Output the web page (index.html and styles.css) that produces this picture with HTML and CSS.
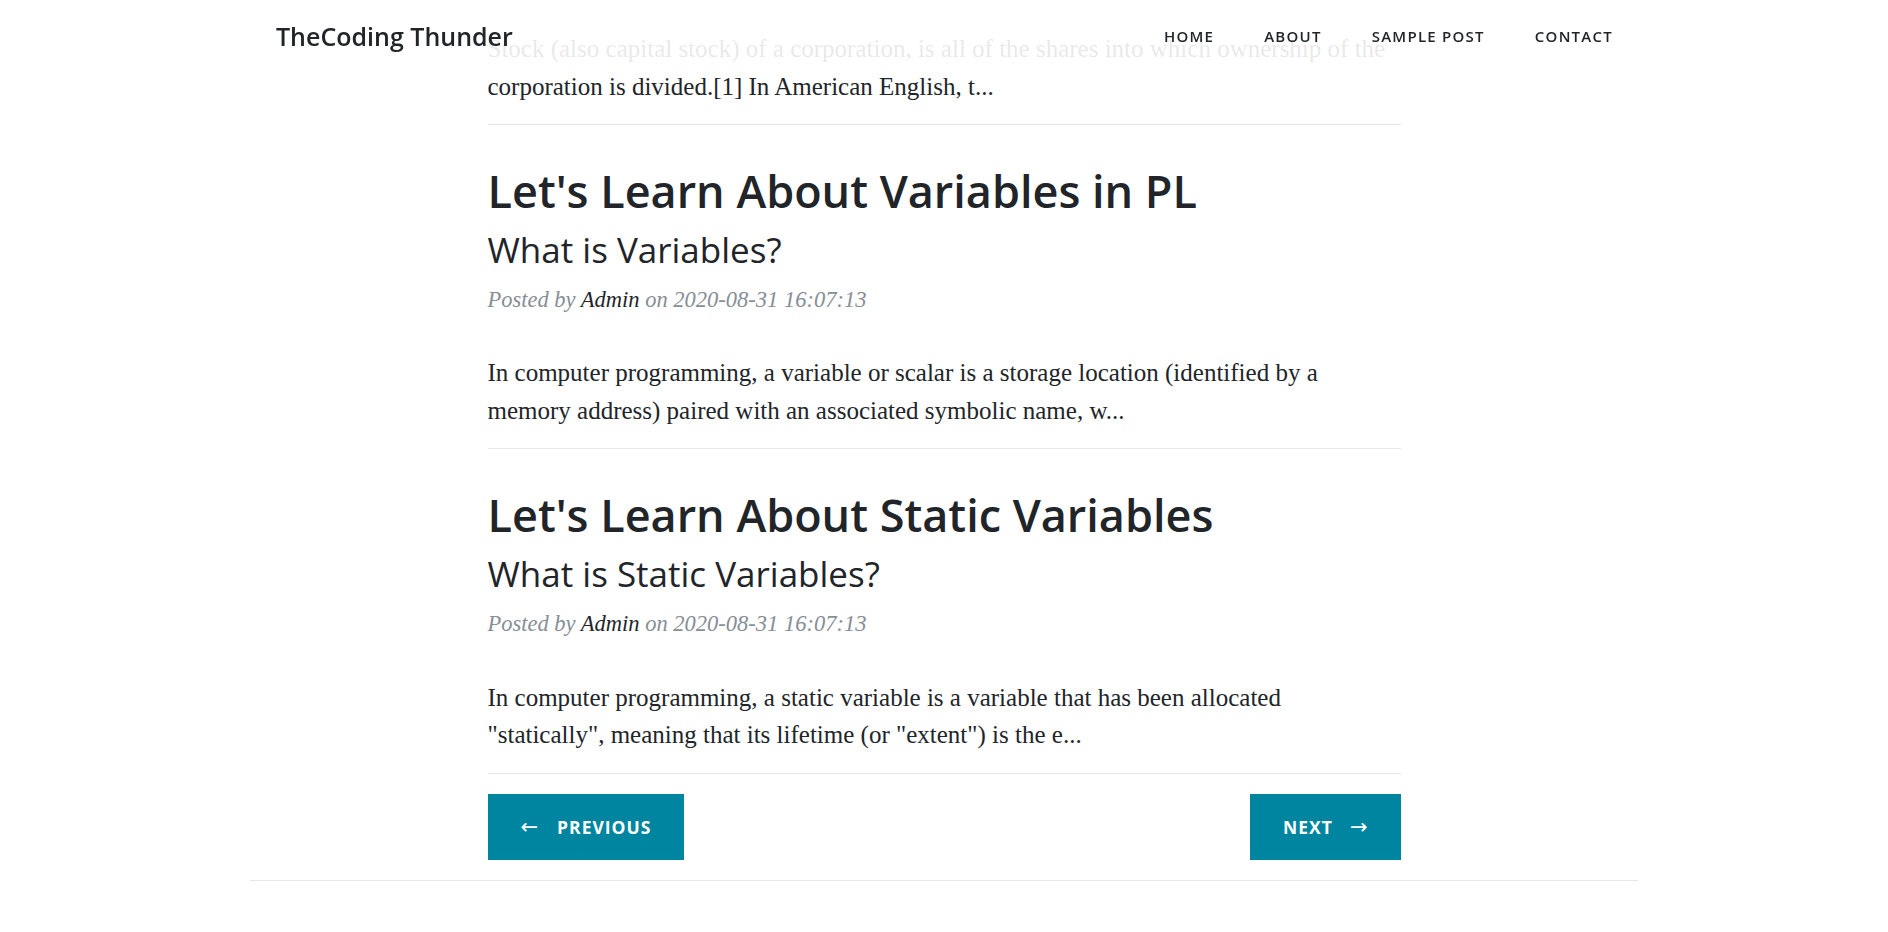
FILE: index.html
```html
<!DOCTYPE html>
<html lang="en">
<head>
<meta charset="utf-8">
<title>TheCoding Thunder</title>
<link rel="stylesheet" href="styles.css">
</head>
<body>
<header class="navbar">
  <div class="nav-inner">
    <a class="brand" href="#">TheCoding Thunder</a>
    <nav class="nav-links">
      <a href="#">Home</a>
      <a href="#">About</a>
      <a href="#">Sample Post</a>
      <a href="#">Contact</a>
    </nav>
  </div>
</header>

<main class="content">
  <p class="excerpt">Stock (also capital stock) of a corporation, is all of the shares into which ownership of the corporation is divided.[1] In American English, t...</p>
  <hr class="rule">

  <article class="post">
    <h2 class="post-title">Let's Learn About Variables in PL</h2>
    <h3 class="post-subtitle">What is Variables?</h3>
    <p class="post-meta">Posted by <a href="#">Admin</a> on 2020-08-31 16:07:13</p>
    <p class="excerpt">In computer programming, a variable or scalar is a storage location (identified by a memory address) paired with an associated symbolic name, w...</p>
  </article>
  <hr class="rule">

  <article class="post">
    <h2 class="post-title">Let's Learn About Static Variables</h2>
    <h3 class="post-subtitle">What is Static Variables?</h3>
    <p class="post-meta">Posted by <a href="#">Admin</a> on 2020-08-31 16:07:13</p>
    <p class="excerpt">In computer programming, a static variable is a variable that has been allocated "statically", meaning that its lifetime (or "extent") is the e...</p>
  </article>
  <hr class="rule">

  <div class="pager">
    <a class="btn" href="#"><span class="arrow">&larr;</span>Previous</a>
    <a class="btn" href="#">Next<span class="arrow arrow-right">&rarr;</span></a>
  </div>
</main>

<hr class="footer-rule">
</body>
</html>
```

FILE: styles.css
```css
html, body {
  margin: 0;
  padding: 0;
  background: #ffffff;
  color: #212529;
}

a {
  color: inherit;
  text-decoration: none;
}

.navbar {
  position: fixed;
  top: 0;
  left: 0;
  right: 0;
  height: 72px;
  background: rgba(255, 255, 255, 0.9);
  z-index: 10;
}

.nav-inner {
  width: 1388px;
  margin: 0 auto;
  height: 100%;
  display: flex;
  align-items: center;
  justify-content: space-between;
  padding-left: 26px;
  box-sizing: border-box;
}

.brand {
  font-family: "Open Sans", sans-serif;
  font-weight: 600;
  font-size: 25px;
  color: #212529;
}

.nav-links {
  display: flex;
  align-items: center;
}

.nav-links a {
  font-family: "Open Sans", sans-serif;
  font-weight: 600;
  font-size: 15px;
  letter-spacing: 1.25px;
  text-transform: uppercase;
  color: #212529;
  padding: 0 25px;
}

.content {
  width: 913px;
  margin: 0 auto;
  padding-top: 30px;
}

.excerpt {
  font-family: "Liberation Serif", "Times New Roman", serif;
  font-size: 25px;
  line-height: 37.5px;
  margin: 0;
  color: #212529;
}

.rule {
  border: 0;
  border-top: 1px solid #e6e6e6;
  margin: 19px 0 0 0;
  height: 0;
}

.post {
  padding-top: 38.5px;
}

.post-title {
  font-family: "Open Sans", sans-serif;
  font-weight: 600;
  font-size: 45px;
  line-height: 54px;
  margin: 0;
  color: #212529;
}

.post-subtitle {
  font-family: "Open Sans", sans-serif;
  font-weight: 400;
  font-size: 35px;
  line-height: 42px;
  margin: 11px 0 0 0;
  color: #212529;
}

.post-meta {
  font-family: "Liberation Serif", "Times New Roman", serif;
  font-style: italic;
  font-size: 22.5px;
  line-height: 33.75px;
  color: #868e96;
  margin: 12.5px 0 37.5px 0;
}

.post-meta a {
  color: #212529;
}

.pager {
  display: flex;
  justify-content: space-between;
  margin-top: 20.5px;
}

.btn {
  display: flex;
  align-items: center;
  height: 66px;
  padding: 0 33px;
  background: #0085a1;
  color: #ffffff;
  font-family: "Open Sans", sans-serif;
  font-weight: 700;
  font-size: 17.5px;
  letter-spacing: 1px;
  text-transform: uppercase;
}

.arrow {
  font-family: "DejaVu Sans", sans-serif;
  font-weight: 400;
  font-size: 21px;
  letter-spacing: 0;
  margin-right: 19px;
}

.arrow-right {
  margin-right: 0;
  margin-left: 17px;
}

.footer-rule {
  width: 1388px;
  border: 0;
  border-top: 1px solid #e6e6e6;
  margin: 20px auto 0 auto;
  height: 0;
}
```
